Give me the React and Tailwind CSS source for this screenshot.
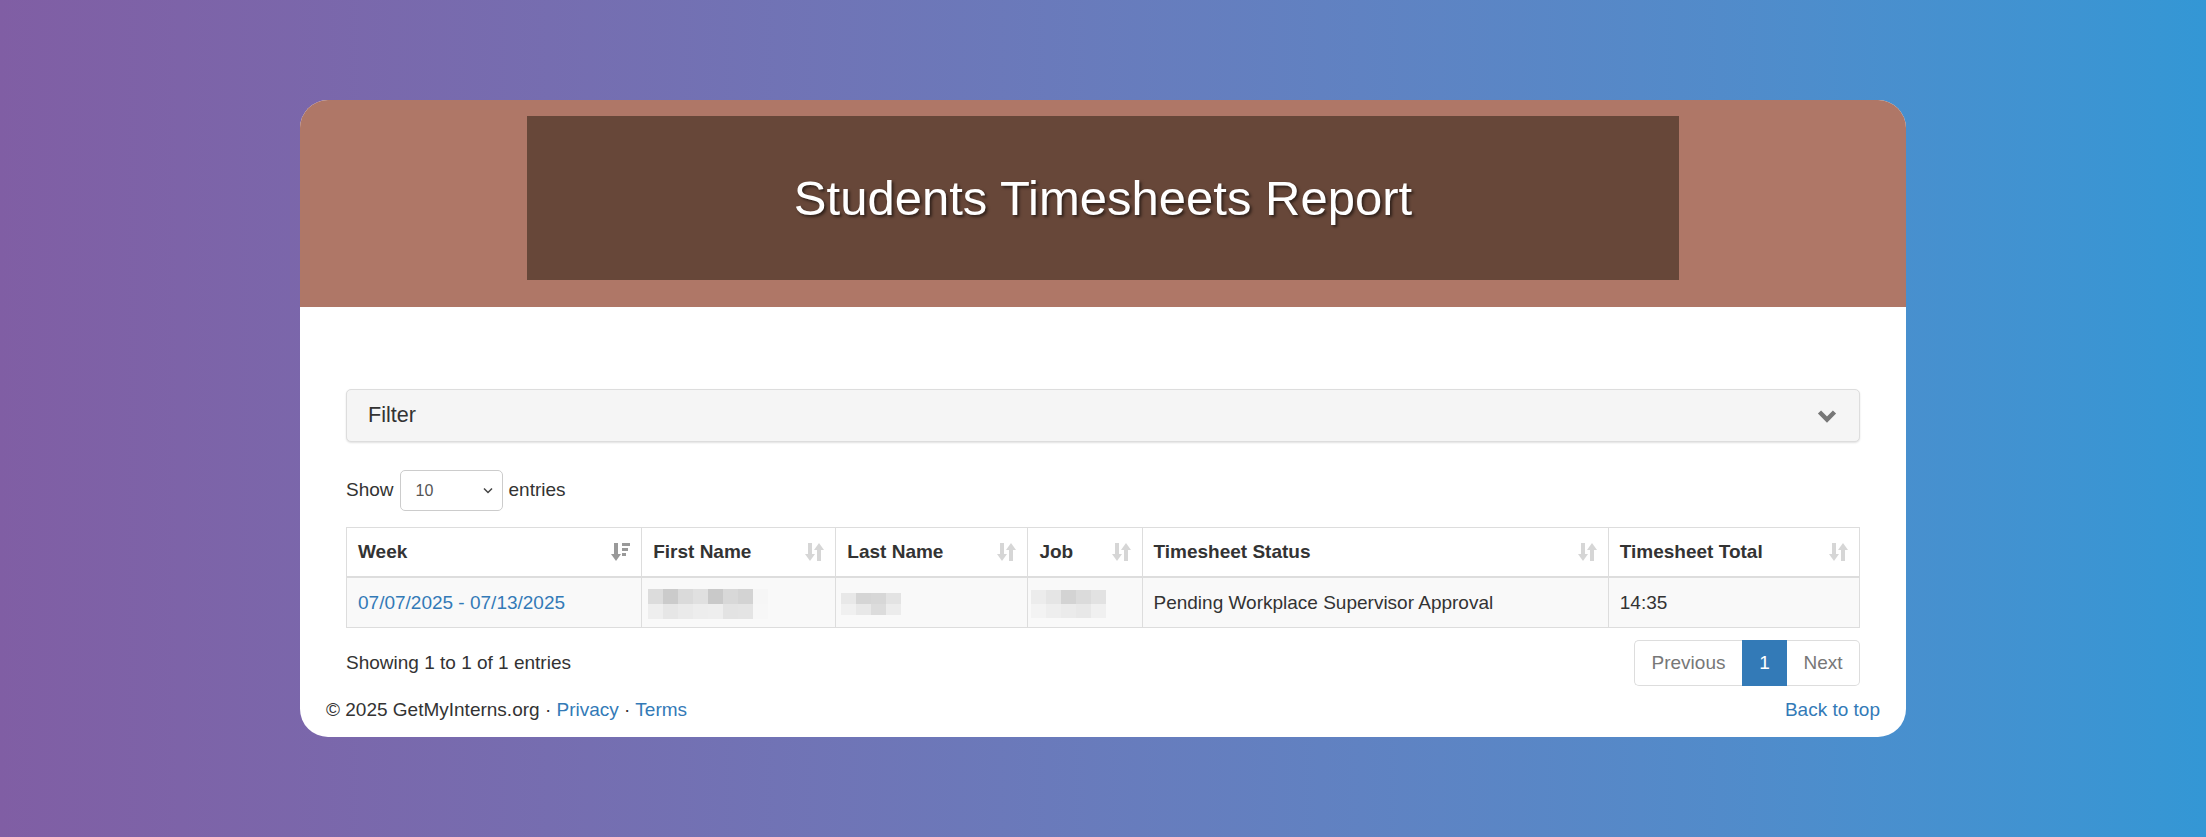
import React from 'react';

const font = "font-['Liberation_Sans',Arial,Helvetica,sans-serif]";

// pixelated placeholders for the redacted names
const blurFirst = [
  ['bg-[#dcdcdc]', 'bg-[#cbcbcb]', 'bg-[#dadada]', 'bg-[#e0e0e0]', 'bg-[#c9c9c9]', 'bg-[#d8d8d8]', 'bg-[#d3d3d3]', 'bg-[#f6f6f6]'],
  ['bg-[#eeeeee]', 'bg-[#e6e6e6]', 'bg-[#eaeaea]', 'bg-[#ededed]', 'bg-[#eeeeee]', 'bg-[#e3e3e3]', 'bg-[#e4e4e4]', 'bg-[#f7f7f7]'],
];
const blurLast = [
  ['bg-[#e8e8e8]', 'bg-[#d5d5d5]', 'bg-[#d7d7d7]', 'bg-[#e3e3e3]'],
  ['bg-[#f0f0f0]', 'bg-[#e8e8e8]', 'bg-[#dcdcdc]', 'bg-[#ececec]'],
];
const blurJob = [
  ['bg-[#ececec]', 'bg-[#e5e5e5]', 'bg-[#d3d3d3]', 'bg-[#dbdbdb]', 'bg-[#e2e2e2]'],
  ['bg-[#f3f3f3]', 'bg-[#eeeeee]', 'bg-[#ebebeb]', 'bg-[#e8e8e8]', 'bg-[#f0f0f0]'],
];

const Blur = ({ rows, rowH }) => (
  <div className="inline-flex flex-col align-middle">
    {rows.map((r, i) => (
      <div key={i} className="flex">
        {r.map((c, j) => (
          <div key={j} className={`w-[15px] ${rowH} ${c}`} />
        ))}
      </div>
    ))}
  </div>
);

const SortBoth = () => (
  <svg width="19" height="18" viewBox="0 0 19 18" className="text-[#d6d6d6] shrink-0">
    <rect x="3" y="0" width="4" height="12" fill="currentColor" />
    <polygon points="0,11 10,11 5,18" fill="currentColor" />
    <polygon points="9,7 19,7 14,0" fill="currentColor" />
    <rect x="12" y="6" width="4" height="12" fill="currentColor" />
  </svg>
);

const SortDesc = () => (
  <svg width="19" height="18" viewBox="0 0 19 18" className="text-[#999999] shrink-0">
    <rect x="3" y="0" width="4" height="12" fill="currentColor" />
    <polygon points="0,11 10,11 5,18" fill="currentColor" />
    <rect x="11" y="0" width="8" height="3" fill="currentColor" />
    <rect x="11" y="5" width="6" height="3" fill="currentColor" />
    <rect x="11" y="10" width="4" height="3" fill="currentColor" />
  </svg>
);

const columns = [
  { label: 'Week', width: 296, icon: <SortDesc /> },
  { label: 'First Name', width: 194, icon: <SortBoth /> },
  { label: 'Last Name', width: 192, icon: <SortBoth /> },
  { label: 'Job', width: 114, icon: <SortBoth /> },
  { label: 'Timesheet Status', width: 466, icon: <SortBoth /> },
  { label: 'Timesheet Total', width: 251, icon: <SortBoth /> },
];

export default function App() {
  return (
    <div className={`min-h-[837px] w-full bg-linear-to-r from-[#805ea4] to-[#3397d5] py-[100px] ${font}`}>
      <div className="mx-auto w-[1606px] overflow-hidden rounded-[28px] bg-white">
        <header className="flex justify-center bg-[#af7767] pt-[16px] pb-[27px]">
          <div className="flex h-[164px] w-[1152px] items-center justify-center bg-[#674739]">
            <h1 className="text-[49px] leading-none font-normal text-white [text-shadow:2px_2px_3px_rgba(0,0,0,0.55)]">
              Students Timesheets Report
            </h1>
          </div>
        </header>

        <main className="px-[46px] pt-[82px] text-[19px] text-[#333333]">
          <div className="flex h-[53px] items-center justify-between rounded-[5px] border border-[#dddddd] bg-[#f5f5f5] pl-[21px] pr-[22px] shadow-[0_1px_2px_rgba(0,0,0,0.12)]">
            <span className="text-[21.6px] text-[#333333]">Filter</span>
            <svg width="20" height="14" viewBox="0 0 20 14">
              <polyline points="2.5,3 10,10.5 17.5,3" fill="none" stroke="#777777" strokeWidth="4.5" />
            </svg>
          </div>

          <div className="mt-[28px] flex h-[41px] items-center">
            <span>Show</span>
            <div className="mx-[6px] flex h-[41px] w-[103px] items-center justify-between rounded-[5px] border border-[#cccccc] pl-[15px] pr-[9px] text-[16px] text-[#555555]">
              <span>10</span>
              <svg width="10" height="7" viewBox="0 0 10 7">
                <polyline points="1,1.5 5,5.5 9,1.5" fill="none" stroke="#444444" strokeWidth="1.5" />
              </svg>
            </div>
            <span>entries</span>
          </div>

          <table className="mt-[16px] w-full table-fixed border-separate border-spacing-0">
            <colgroup>
              {columns.map((c) => (
                <col key={c.label} style={{ width: c.width }} />
              ))}
            </colgroup>
            <thead>
              <tr>
                {columns.map((c, i) => (
                  <th
                    key={c.label}
                    className={`border-t border-r border-b-2 border-[#dddddd] px-[11px] py-0 text-left font-bold leading-[48px] ${i === 0 ? 'border-l' : ''}`}
                  >
                    <div className="flex items-center justify-between">
                      <span>{c.label}</span>
                      {c.icon}
                    </div>
                  </th>
                ))}
              </tr>
            </thead>
            <tbody>
              <tr className="bg-[#f9f9f9]">
                <td className="border-r border-b border-l border-[#dddddd] px-[11px] py-0 leading-[49px]">
                  <a className="text-[#337ab7]">07/07/2025 - 07/13/2025</a>
                </td>
                <td className="border-r border-b border-[#dddddd] pl-[6px] py-0 leading-[49px]">
                  <Blur rows={blurFirst} rowH="h-[15px]" />
                </td>
                <td className="border-r border-b border-[#dddddd] pl-[5px] py-0 leading-[49px]">
                  <Blur rows={blurLast} rowH="h-[11px]" />
                </td>
                <td className="border-r border-b border-[#dddddd] pl-[3px] py-0 leading-[49px]">
                  <Blur rows={blurJob} rowH="h-[14px]" />
                </td>
                <td className="border-r border-b border-[#dddddd] px-[11px] py-0 leading-[49px]">
                  Pending Workplace Supervisor Approval
                </td>
                <td className="border-r border-b border-[#dddddd] px-[11px] py-0 leading-[49px]">14:35</td>
              </tr>
            </tbody>
          </table>

          <div className="mt-[12px] flex items-center justify-between">
            <span>Showing 1 to 1 of 1 entries</span>
            <div className="flex h-[46px]">
              <span className="flex w-[108px] items-center justify-center rounded-l-[5px] border-y border-l border-[#dddddd] text-[#777777]">
                Previous
              </span>
              <span className="flex w-[45px] items-center justify-center border border-[#337ab7] bg-[#337ab7] text-white">
                1
              </span>
              <span className="flex w-[73px] items-center justify-center rounded-r-[5px] border-y border-r border-[#dddddd] text-[#777777]">
                Next
              </span>
            </div>
          </div>
        </main>

        <footer className="flex justify-between px-[26px] pt-[10px] pb-[13px] text-[19px] leading-[28px] text-[#333333]">
          <p>
            © 2025 GetMyInterns.org · <a className="text-[#337ab7]">Privacy</a> ·{' '}
            <a className="text-[#337ab7]">Terms</a>
          </p>
          <a className="text-[#337ab7]">Back to top</a>
        </footer>
      </div>
    </div>
  );
}
